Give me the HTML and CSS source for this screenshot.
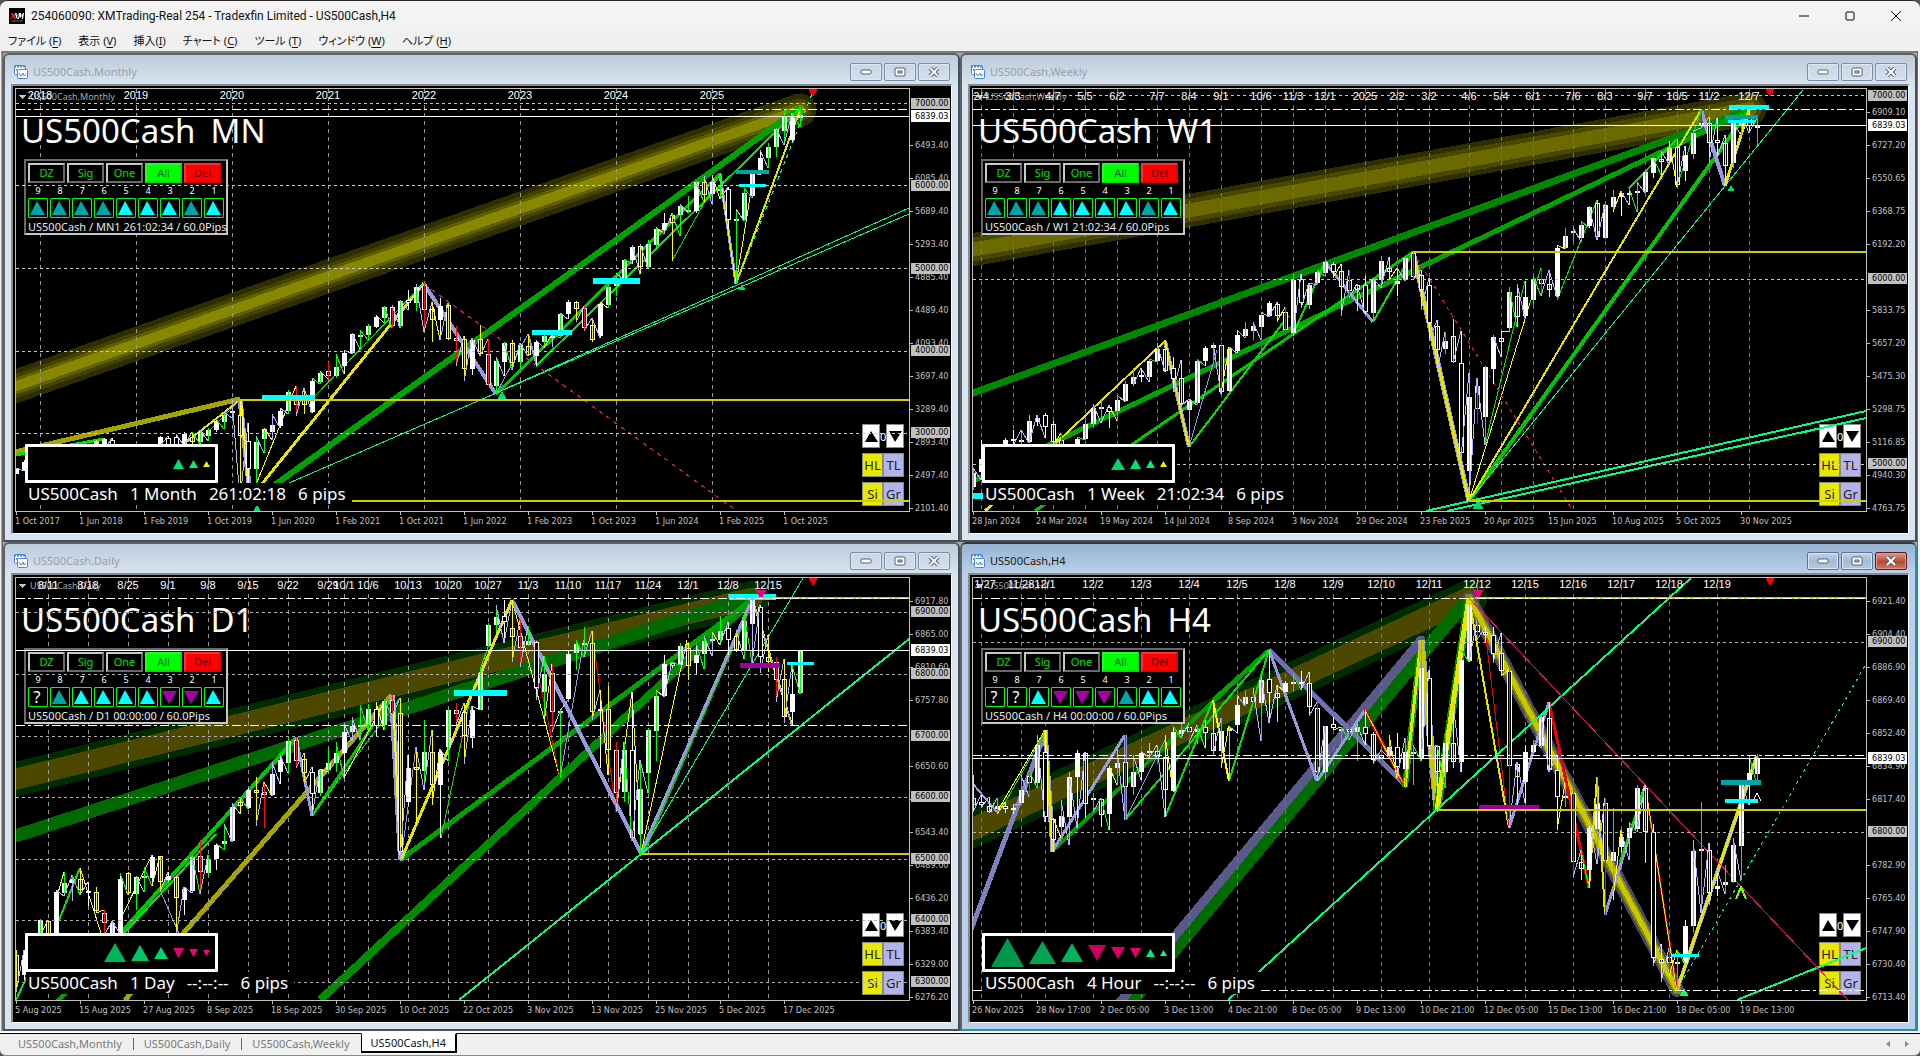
FILE: index.html
```html
<!DOCTYPE html>
<html lang="ja">
<head>
<meta charset="utf-8">
<title>254060090: XMTrading-Real 254 - Tradexfin Limited - US500Cash,H4</title>
<link rel="stylesheet" href="styles.css">
</head>
<body>
<div class="app">
  <header class="titlebar">
    <svg class="app-icon" viewBox="0 0 16 16" aria-hidden="true">
      <rect width="16" height="16" fill="#000"/>
      <path d="M2 5h2l1 2 2-2h1L6 8l1 3H5L4 9l-2 2H1l2-3z" fill="#d22"/>
      <path d="M6 5h1l1 2 2-2 0 0-2 3 1 3H8L7 9zM9 11l1-6h2l0 3 2-3h1l-1 6h-1l0-3-2 2-1-2 0 3z" fill="#fff"/>
      <path d="M2 13h12" stroke="#666"/>
    </svg>
    <h1 class="app-title">254060090: XMTrading-Real 254 - Tradexfin Limited - US500Cash,H4</h1>
    <div class="sys">
      <button class="sys-btn" aria-label="Minimize"><svg width="10" height="10"><path d="M0 5h10" stroke="#000"/></svg></button>
      <button class="sys-btn" aria-label="Maximize"><svg width="10" height="10"><rect x="1" y="1" width="8" height="8" rx="1" fill="none" stroke="#000"/></svg></button>
      <button class="sys-btn" aria-label="Close"><svg width="10" height="10"><path d="M0 0l10 10M10 0L0 10" stroke="#000"/></svg></button>
    </div>
  </header>
  <nav class="menu">
    <button class="menu-item">ファイル (<u>F</u>)</button>
    <button class="menu-item">表示 (<u>V</u>)</button>
    <button class="menu-item">挿入(<u>I</u>)</button>
    <button class="menu-item">チャート (<u>C</u>)</button>
    <button class="menu-item">ツール (<u>T</u>)</button>
    <button class="menu-item">ウィンドウ (<u>W</u>)</button>
    <button class="menu-item">ヘルプ (<u>H</u>)</button>
  </nav>
  <main class="mdi" id="mdi"></main>
  <footer class="tabs">
    <button class="tab">US500Cash,Monthly</button>
    <button class="tab">US500Cash,Daily</button>
    <button class="tab">US500Cash,Weekly</button>
    <button class="tab active">US500Cash,H4</button>
    <div class="tab-scroll">
      <button class="scroll-btn" aria-label="Scroll left"><svg width="4" height="6"><path d="M4 0v6L0 3z" fill="#8a8a8a"/></svg></button>
      <button class="scroll-btn" aria-label="Scroll right"><svg width="4" height="6"><path d="M0 0v6l4-3z" fill="#8a8a8a"/></svg></button>
    </div>
  </footer>
</div>
<script src="charts.js"></script>
</body>
</html>
```
FILE: styles.css
```css
* { box-sizing: border-box; }
html, body { height: 100%; }
body { margin: 0; background: #555; font-family: "Noto Sans", "Noto Sans CJK JP", sans-serif; font-size: 11px; }
button { font: inherit; margin: 0; padding: 0; border: 0; background: none; color: inherit; }

.app { display: flex; flex-direction: column; min-height: 100vh; border-top: 1px solid #2a2626; border-bottom: 1px solid #8a8a8a; border-radius: 8px 8px 6px 6px; background: #f0f0f0; overflow: hidden; }

.titlebar { display: flex; align-items: center; height: 30px; padding-left: 9px; background: #f3f3f3; }
.app-icon { width: 16px; height: 16px; }
.app-title { flex: 1; margin: 0 0 0 6px; font-family: Roboto, sans-serif; font-size: 12px; font-weight: 400; line-height: 16px; color: #111; }
.sys { display: flex; padding-right: 1px; height: 100%; }
.sys-btn { width: 46px; display: flex; align-items: center; justify-content: center; }

.menu { display: flex; height: 20px; padding-left: 8px; gap: 17px; }
.menu-item { font-family: "Noto Sans", "Noto Sans CJK JP", sans-serif; font-feature-settings: "palt"; line-height: 20px; white-space: nowrap; color: #111; }
.menu-item u { text-underline-offset: 2px; }

.mdi { flex: 1; display: grid; grid-template-columns: 1fr 1fr; grid-template-rows: 1fr 1fr; margin: 0 3px; border-top: 2px solid #7a7a7a; background: #ababab; box-shadow: -1px 0 #696969, -2px 0 #a0a0a0, 1px 0 #696969, 2px 0 #fff; }

.win { display: flex; flex-direction: column; min-width: 0; min-height: 0; padding: 0 6px 6px; border: 2px solid; border-color: #5c6166 #4b4f54 #4b4f54 #5c6166; border-radius: 6px 6px 0 0; background: linear-gradient(#bccbd9, #d7e4f2 30px); overflow: hidden; }
.win.active { background: linear-gradient(#98b4d3, #b9d1ea 30px); border-color: #33383d #2c8ea8 #2c8ea8 #5c6166; }
.win-bar { display: flex; align-items: center; height: 29px; padding: 5px 2px 0 3px; gap: 5px; }
.win-title { flex: 1; margin: 0; font-size: 11px; font-weight: 400; line-height: 16px; color: #9b9fa3; }
.win.active .win-title { color: #1c1c1c; }
.win-icon { width: 14px; height: 14px; }
.win-btns { display: flex; gap: 2px; }
.win-btn { width: 32px; height: 18px; display: flex; align-items: center; justify-content: center; border: 1px solid #7d8da8; border-radius: 2px; background: linear-gradient(#c9d7e5, #d3dfec); box-shadow: inset 0 0 0 1px #dce8f3; }
.win.active .win-btn { background: linear-gradient(#c0d2e6, #a4bdd8 50%, #b4cbe3); border-color: #5f7391; }
.win.active .win-btn.close { background: linear-gradient(#dd9a8c, #c2503a 50%, #b8432e 51%, #cf7a62); border-color: #5a1d1d; box-shadow: inset 0 0 0 1px #dd9a8c; }

.client { flex: 1; min-height: 0; display: grid; grid-template-columns: minmax(0, 1fr) 41px; grid-template-rows: minmax(0, 1fr) 21px; padding: 2px 0 0 2px; background: #000; border: solid; border-width: 2px 1px 1px 2px; border-color: #8a8a8a #fff #fff #8a8a8a; }
.plot { position: relative; border: 1px solid #c0c0c0; overflow: hidden; }
.layer { position: absolute; inset: 0; width: 100%; height: 100%; pointer-events: none; }
.price-axis, .time-axis { display: block; width: 100%; height: 100%; overflow: visible; }
.axis-text { font-family: "DejaVu Sans Condensed", "DejaVu Sans", sans-serif; font-size: 9px; fill: #c0c0c0; }
.axis-text.on-box { fill: #000; }
.date-text { font-family: "Liberation Sans", Arial, sans-serif; font-size: 11px; fill: #fff; text-anchor: middle; }
.corner { font-family: "Noto Sans", sans-serif; font-size: 9px; fill: #a8a8a8; }

.heading { position: absolute; left: 5px; top: 20px; margin: 0; display: flex; gap: 15px; font-size: 33px; font-weight: 400; line-height: 44px; color: #fff; white-space: nowrap; }

.panel { position: absolute; left: 8px; top: 70px; width: 204px; height: 76px; padding: 2px; border: 2px solid; border-color: #696969 #c8c8c8 #c8c8c8 #696969; background: #000; overflow: hidden; }
.panel-row { display: flex; gap: 2px; }
.cmd { width: 37px; height: 20px; border: 2px solid; border-color: #c8c8c8 #696969 #696969 #c8c8c8; color: #00e000; font-size: 11px; line-height: 16px; text-align: center; }
.cmd.all { background: #0f0; border-color: #20ff20 #00e000 #00e000 #20ff20; color: #063; }
.cmd.del { background: #f00; border-color: #ff3030 #e00000 #e00000 #ff3030; color: #500; }
.num { width: 20px; height: 15px; font-size: 9px; line-height: 15px; text-align: center; color: #fff; }
.cell { width: 20px; height: 20px; padding-right: 2px; border: 1px solid #0f0; border-radius: 1px; display: flex; align-items: center; justify-content: center; font-size: 16px; line-height: 18px; color: #fff; }
.status { margin: 0; padding-top: 1px; font-size: 11px; line-height: 16px; color: #e8e8e8; white-space: nowrap; }

.tools { position: absolute; right: 5px; top: 335px; width: 42px; display: flex; flex-direction: column; gap: 5px; }
.tool-row { display: flex; justify-content: space-between; align-items: center; color: #fff; font-size: 11px; }
.tool { height: 24px; flex: 1; border: 1px solid #8a8a8a; font-size: 13px; line-height: 20px; color: #222; background: #b4b4ec; }
.tool.yellow { background: #eaea00; }
.tool.arrow { flex: none; width: 18px; background: #fff; display: flex; align-items: center; justify-content: center; }

.signals { position: absolute; z-index: 2; left: 9px; top: 355px; width: 193px; height: 39px; display: flex; justify-content: flex-end; align-items: center; gap: 5px; padding-right: 5px; border: 3px solid #fff; border-radius: 1px; background: #000; }
.info { position: absolute; z-index: 2; left: 10px; top: 394px; margin: 0; padding: 0 6px 0 2px; display: flex; gap: 12px; font-size: 17px; line-height: 22px; color: #fff; background: #000; white-space: nowrap; }

.tabs { display: flex; align-items: stretch; height: 22px; margin-top: 2px; padding: 0 8px 2px 7px; border-top: 1px solid #000; color: #7a7a7a; box-shadow: 0 -2px #fff; }
.tab { position: relative; padding: 0 11px; line-height: 18px; }
.tab + .tab::before { content: ""; position: absolute; left: 0; top: 4px; height: 12px; border-left: 1px solid #666; }
.tab.active { margin-top: -1px; border: 1px solid #000; border-top-color: #fff; border-width: 1px 2px 2px 1px; background: #fff; color: #111; padding: 0 9px; }
.tab.active::before { display: none; }
.tab-scroll { margin-left: auto; display: flex; gap: 8px; }
.scroll-btn { width: 11px; display: flex; align-items: center; justify-content: center; }
```
FILE: charts.js
```javascript
// Bars are written as kind + high,bodyTop,bodyBottom,low ("f" filled, "o" outlined, "-" no bar).
// Lines are x1,y1,x2,y2,colour,width[,dash]. All coordinates share one workspace origin.
const C = { g: '#00a400', G: '#00c800', l: '#00e400', y: '#e6e600', Y: '#ffff00', o: '#a5a500', v: '#9999e0', r: '#ee0000', s: '#00ff7f', p: '#f0106f', h: '#cfcf00' };

const charts = [
{
  name: 'Monthly', frame: 'MN', info: ['1 Month', '261:02:18'], status: 'MN1 261:02:34', ox: 16, oy: 89,
  cells: 'ttttccctc', signals: ['u11', 'u9', 'y7'],
  bars: 'f468,468,474,474 f460,462,470,471 - - - - - - - - f440,441,446,448 f438,439,446,450 o438,440,446,450 - - - - - f436,437,446,446 o436,438,446,446 o434,437,446,446 f432,434,446,446 o432,437,442,446 f430,432,442,444 f428,430,436,441 f419,421,430,432 f412,415,422,429 f400,411,413,418 o399,415,436,500 o423,441,469,505 f436,442,469,490 f428,429,439,453 f414,425,432,440 f408,411,426,428 f390,392,411,414 o386,396,405,416 o388,400,405,414 f378,381,412,413 f371,373,382,384 o362,371,376,379 f354,367,376,378 f350,353,366,374 f333,334,353,354 f330,335,337,349 f324,326,335,340 f315,317,327,328 f306,307,318,323 o305,307,326,328 f300,301,326,328 o290,300,303,310 f284,287,303,311 o283,285,310,332 o302,309,320,342 f298,306,320,340 o303,305,339,340 o326,338,341,366 o336,339,369,381 f338,340,369,375 o325,339,354,356 o339,354,385,386 f357,361,386,394 f342,343,362,376 o340,343,363,370 f343,345,362,369 o334,346,355,356 f340,342,356,366 f334,336,342,348 f334,336,338,347 f313,314,336,338 f300,302,314,319 o301,302,309,322 o306,308,328,331 o318,325,340,342 f302,304,336,338 f285,287,305,308 f273,281,286,296 f259,260,278,280 f245,247,260,264 o244,246,267,274 f240,244,267,268 f227,229,245,250 f213,223,230,234 o213,215,223,261 f204,206,215,236 f196,210,212,213 f181,182,211,213 o176,182,195,203 f175,182,194,204 f173,189,191,199 o187,189,220,229 f209,219,221,284 f188,193,220,221 f172,174,196,198 f150,158,174,175 f143,147,158,168 f128,129,147,157 f110,117,131,145 f113,117,140,142 f108,115,118,127',
  back: [
    [8,389,800,110,'#2d2d00',33], [8,389,800,110,'#434300',23], [8,389,800,110,'#5f5f00',16], [8,389,800,110,'#878700',10],
    [15,452,240,399,C.o,5], [15,455,104,439,C.l,3], [251,502,800,108,C.g,6], [185,443,240,400,C.y,2], [200,440,240,400,C.l,1],
    [496,394,720,174,C.G,3], [536,366,800,108,C.l,2], [672,261,720,174,C.l,1], [257,490,424,283,C.y,3], [424,284,496,394,C.v,4], [496,394,528,334,C.v,1], [528,334,537,366,C.v,2],
    [240,399,251,505,C.v,5], [241,399,250,505,C.Y,2], [257,482,296,386,C.Y,1], [315,396,424,283,C.l,1],
    [720,174,736,284,C.v,3], [722,190,736,284,C.Y,1], [736,284,752,185,C.Y,1], [736,284,800,110,C.y,2], [736,284,812,94,C.s,1,'4 4'],
    [289,483,909,214,C.s,1], [496,393,909,208,C.s,1], [424,284,737,511,C.p,1,'5 4']
  ],
  front: [[240,400,909,400,C.h,2], [348,501,909,501,C.h,2]],
  zones: [[262,395,53,4,'#0ff'], [532,330,40,5,'#0ff'], [593,278,47,6,'#0ff'], [736,170,33,4,'#00a5a5'], [739,184,27,3,'#0ff']],
  marks: [[742,284,7,'#00e070'], [502,391,9,'#00e070'], [257,505,11,'#00e070']],
  last: 116, dashdot: [109], grid: [103, 185, 268, 351, 433], step: '#c8c8c8',
  dates: [[40,'2018'],[136,'2019'],[232,'2020'],[328,'2021'],[424,'2022'],[520,'2023'],[616,'2024'],[712,'2025']], dateColor: '#999', dateY: 99,
  prices: [[145,'6493.40'],[178,'6085.40'],[211,'5689.40'],[244,'5293.40'],[277,'4885.40'],[310,'4489.40'],[343,'4093.40'],[376,'3697.40'],[409,'3289.40'],[442,'2893.40'],[475,'2497.40'],[508,'2101.40']],
  levels: [[103,'7000.00'],[185,'6000.00'],[268,'5000.00'],[350,'4000.00'],[432,'3000.00']],
  times: ['1 Oct 2017','1 Jun 2018','1 Feb 2019','1 Oct 2019','1 Jun 2020','1 Feb 2021','1 Oct 2021','1 Jun 2022','1 Feb 2023','1 Oct 2023','1 Jun 2024','1 Feb 2025','1 Oct 2025']
},
{
  name: 'Weekly', frame: 'W1', info: ['1 Week', '21:02:34'], status: 'W1 21:02:34', ox: 973, oy: 89,
  cells: 'tttcccctc', signals: ['u14', 'u11', 'u9', 'y7'],
  bars: 'f468,473,487,490 f440,459,472,480 - - f438,440,446,446 f430,439,441,446 f430,440,442,446 f415,421,442,443 f415,418,422,426 o413,415,427,438 o421,424,442,446 o433,440,446,446 - f437,439,446,446 f420,424,439,440 f404,408,424,428 f400,407,409,423 o405,407,412,428 f395,400,411,421 f381,384,401,402 f368,377,384,386 f368,375,377,382 f359,361,377,382 f343,349,361,362 o340,349,371,372 o357,368,379,392 o360,378,404,406 f399,401,410,447 f359,361,403,405 f346,348,361,366 f343,345,348,363 o342,345,392,394 f347,349,391,392 f330,335,351,353 f322,329,336,338 f322,326,331,340 f312,315,327,340 f301,303,316,317 o302,304,316,322 o307,312,330,335 f274,280,333,336 o274,279,303,308 f283,285,305,309 f270,272,283,285 f260,262,273,276 o262,264,272,278 o264,271,287,316 o270,280,291,298 o284,285,290,311 o276,285,312,314 f278,279,313,322 f256,261,280,288 o257,268,272,280 f268,281,284,296 f256,258,280,281 o252,253,277,280 o270,275,290,310 o278,285,323,341 o320,326,350,372 f332,341,349,354 o319,336,362,363 o331,363,453,458 f373,397,471,501 o378,386,409,424 f366,367,417,445 f335,337,369,384 o331,338,342,357 f287,292,328,332 o284,296,317,327 f281,297,316,318 f276,279,300,305 o268,279,284,296 o270,284,290,297 f245,248,296,297 f228,236,248,249 f227,231,233,242 f221,225,238,242 f206,207,226,228 o200,203,237,240 f204,205,238,239 f190,197,207,212 f191,193,197,216 o188,193,195,205 f182,191,193,212 f170,172,192,193 f157,158,173,178 o151,159,162,175 f141,148,161,164 o139,147,185,187 f146,155,171,181 f131,133,154,159 o110,123,125,128 o117,123,143,163 o118,140,143,158 o135,143,166,186 f122,123,163,168 f114,120,125,135 o110,118,126,133 f118,125,128,147',
  back: [
    [960,252,1750,109,'#2e2e00',33], [960,252,1750,109,'#484800',23], [960,252,1750,109,'#6a6a00',14],
    [965,396,1749,110,'#008800',7], [973,481,1749,110,'#00a400',5], [1469,501,1749,110,C.G,4], [1035,511,1413,252,C.G,3],
    [1189,447,1288,316,C.l,2], [1293,335,1325,262,C.l,2], [1373,322,1413,252,C.l,2], [1056,443,1165,341,C.y,2], [985,511,1000,497,C.y,3],
    [1165,341,1189,447,C.v,4], [1165,341,1189,447,C.y,2], [1325,262,1373,322,C.v,3], [1413,252,1469,501,C.v,5], [1413,252,1469,501,C.y,3],
    [1469,501,1701,110,C.y,2], [1469,501,1530,303,C.Y,1], [1530,303,1541,268,C.l,1], [1485,445,1525,281,C.l,1], [1557,300,1597,200,C.l,1], [1469,501,1803,90,C.s,1],
    [1701,110,1725,186,C.v,4], [1725,186,1749,110,C.y,3], [1426,511,1866,411,C.s,2], [1447,511,1866,418,C.s,2], [1413,252,1573,511,C.p,1,'4 4'],
    [1317,283,1325,262,C.l,2], [1189,447,1217,350,C.v,1], [1701,110,1677,187,C.l,1], [1629,188,1677,139,C.l,2]
  ],
  front: [[1413,252,1866,252,C.h,2], [1470,501,1866,501,C.h,2], [1800,426,1866,411,C.s,2], [1800,433,1866,418,C.s,2]],
  zones: [[1729,105,40,4,'#0ff'], [1725,115,33,4,'#00a5a5'], [1728,120,27,3,'#0ff'], [972,493,13,6,'#0ff']],
  marks: [[1731,185,7,'#00e070'], [1478,500,11,'#00e070']],
  last: 125, dashdot: [109], grid: [95, 279, 464], step: '#c8c8c8',
  dates: [[981,'2/4'],[1013,'3/3'],[1053,'4/7'],[1085,'5/5'],[1117,'6/2'],[1157,'7/7'],[1189,'8/4'],[1221,'9/1'],[1261,'10/6'],[1293,'11/3'],[1325,'12/1'],[1365,'2025'],[1397,'2/2'],[1429,'3/2'],[1469,'4/6'],[1501,'5/4'],[1533,'6/1'],[1573,'7/6'],[1605,'8/3'],[1645,'9/7'],[1677,'10/5'],[1709,'11/2'],[1749,'12/7']], dateColor: '#777', dateY: 100,
  prices: [[112,'6909.10'],[145,'6727.20'],[178,'6550.65'],[211,'6368.75'],[244,'6192.20'],[310,'5833.75'],[343,'5657.20'],[376,'5475.30'],[409,'5298.75'],[442,'5116.85'],[475,'4940.30'],[508,'4763.75']],
  levels: [[95,'7000.00'],[278,'6000.00'],[463,'5000.00']],
  times: ['28 Jan 2024','24 Mar 2024','19 May 2024','14 Jul 2024','8 Sep 2024','3 Nov 2024','29 Dec 2024','23 Feb 2025','20 Apr 2025','15 Jun 2025','10 Aug 2025','5 Oct 2025','30 Nov 2025']
},
{
  name: 'Daily', frame: 'D1', info: ['1 Day', '--:--:--'], status: 'D1 00:00:00', ox: 16, oy: 578,
  cells: '?tccccmmc', signals: ['u22', 'u18', 'u14', 'd11', 'd9', 'd7'],
  bars: 'o950,955,983,992 f950,955,975,980 - f919,920,936,936 o920,921,936,936 f890,892,933,934 f872,883,893,896 f875,879,883,901 o868,879,890,895 f882,891,893,906 o887,892,911,913 o910,913,923,936 f921,923,936,936 f873,879,933,934 o872,873,893,895 f876,877,894,910 f867,876,878,892 f855,857,878,886 o856,856,882,892 f872,876,880,882 o876,877,898,936 f887,889,900,915 f855,857,891,893 o840,856,872,894 f855,859,873,876 f843,845,859,870 f824,841,844,850 f803,807,841,842 o797,802,806,814 f788,790,808,809 o777,790,793,826 o782,792,795,828 f762,774,795,796 f755,760,772,784 f737,741,763,773 o737,740,761,768 o753,759,773,784 o767,772,794,816 f769,770,793,796 f747,763,770,772 f742,753,763,772 f724,732,753,778 f717,726,732,741 f705,725,727,740 f704,709,725,730 o702,709,726,736 f699,701,725,730 o695,700,714,716 o698,713,852,861 f755,768,802,806 o747,767,770,824 f720,752,771,790 o730,752,785,805 f749,752,785,838 f709,710,747,761 o703,710,714,725 o703,712,736,764 f706,710,738,748 f670,673,710,710 f623,625,646,647 f605,617,625,632 o600,616,622,643 o600,628,637,662 o620,636,648,667 f626,641,645,646 o641,642,688,700 f656,674,692,723 o664,673,712,732 f711,711,713,778 f650,654,699,700 f640,644,653,670 f627,643,645,657 o631,643,712,720 f690,709,711,768 o686,709,750,775 o742,750,793,812 f742,750,792,802 o692,750,838,841 f760,789,834,855 f728,730,773,793 f690,696,731,761 f655,664,696,697 o662,663,666,668 f643,646,665,665 o643,648,666,680 f643,655,663,674 f636,641,654,669 f632,639,641,656 f616,631,640,645 o622,628,640,655 o630,636,650,652 f613,621,650,659 f598,600,624,663 o605,607,657,673 o635,657,662,672 o657,662,680,702 o659,679,717,723 f665,694,712,725 f650,650,693,694',
  back: [
    [0,783,752,598,'#002c00',34], [0,783,752,598,'#4d4800',21], [0,841,752,596,'#006a00',13], [320,1000,752,600,'#008c00',8], [400,860,752,600,C.g,5],
    [125,1000,392,695,C.o,5], [118,936,296,738,C.G,4], [118,940,216,834,C.l,2], [57,925,80,868,C.l,2], [57,1001,66,993,C.g,4], [16,1000,32,966,C.l,2], [312,816,392,697,C.G,3], [312,816,400,698,C.l,1],
    [56,900,64,872,C.Y,1], [80,868,102,936,C.Y,1], [120,920,152,855,C.Y,1], [160,890,180,936,C.v,1],
    [296,737,312,816,C.v,3], [392,695,401,860,C.v,6], [393,695,400,855,C.Y,2], [401,860,416,747,C.v,1], [401,860,512,600,C.y,3], [344,778,384,702,C.Y,1], [441,838,470,700,C.l,1],
    [512,600,560,778,C.Y,1], [528,626,560,778,C.r,1], [560,778,584,640,C.v,1], [592,631,616,812,C.r,1], [616,812,632,692,C.Y,1], [632,692,641,853,C.Y,1],
    [512,600,641,853,C.v,4], [643,853,752,602,C.G,3], [641,853,750,604,C.v,3], [641,853,687,640,C.Y,1], [641,853,803,578,C.s,1], [459,1000,909,639,C.s,2],
    [752,598,792,725,C.Y,2], [752,598,792,725,C.v,1]
  ],
  front: [[755,598,909,598,C.h,2], [641,854,909,854,C.h,2]],
  zones: [[454,690,53,6,'#0ff'], [729,594,47,6,'#0ff'], [740,663,40,5,'#a000a0'], [787,662,27,3,'#0ff']],
  marks: [[761,590,11,'#f00078','d']],
  last: 650, dashdot: [598, 725], grid: [612, 674, 736, 797, 859, 920, 982], step: '#b0b0b0',
  dates: [[48,'8/11'],[88,'8/18'],[128,'8/25'],[168,'9/1'],[208,'9/8'],[248,'9/15'],[288,'9/22'],[328,'9/29'],[344,'10/1'],[368,'10/6'],[408,'10/13'],[448,'10/20'],[488,'10/27'],[528,'11/3'],[568,'11/10'],[608,'11/17'],[648,'11/24'],[688,'12/1'],[728,'12/8'],[768,'12/15']], dateColor: '#999', dateY: 589,
  prices: [[601,'6917.80'],[634,'6865.00'],[667,'6810.60'],[700,'6757.80'],[766,'6650.60'],[799,'6596.20'],[832,'6543.40'],[865,'6489.00'],[898,'6436.20'],[931,'6383.40'],[964,'6329.00'],[997,'6276.20']],
  levels: [[611,'6900.00'],[673,'6800.00'],[735,'6700.00'],[796,'6600.00'],[858,'6500.00'],[919,'6400.00'],[981,'6300.00']],
  times: ['5 Aug 2025','15 Aug 2025','27 Aug 2025','8 Sep 2025','18 Sep 2025','30 Sep 2025','10 Oct 2025','22 Oct 2025','3 Nov 2025','13 Nov 2025','25 Nov 2025','5 Dec 2025','17 Dec 2025']
},
{
  name: 'H4', frame: 'H4', info: ['4 Hour', '--:--:--'], status: 'H4 00:00:00', ox: 973, oy: 578, active: true,
  cells: '??cmmmtcc', signals: ['u33', 'u27', 'u22', 'd18', 'd14', 'd11', 'u9', 'u7'],
  bars: 'o775,798,805,812 o795,802,805,808 o797,806,812,813 f798,806,809,814 o802,806,809,813 f804,808,810,814 f775,790,803,804 o770,776,783,797 f735,745,783,788 o730,752,817,822 o818,819,840,852 f800,816,827,838 f772,777,817,845 f750,753,777,828 o752,753,804,818 f793,798,800,812 o798,799,815,827 f766,768,814,830 f750,763,768,785 o735,762,787,820 f755,772,787,795 f751,753,772,780 f743,751,753,758 o745,751,757,765 o735,757,790,817 f726,732,791,792 f716,730,734,738 o723,727,732,742 f725,729,732,744 o720,727,733,748 o700,733,751,755 f718,731,751,768 f726,728,731,781 f695,705,725,733 f690,697,704,706 o688,697,702,704 f676,680,703,741 o650,679,693,723 o685,693,698,722 f681,683,692,692 f673,682,684,692 o671,682,684,690 o672,683,707,716 o702,708,772,781 f726,726,772,779 o717,724,728,730 f727,729,731,742 o719,729,732,740 f724,727,732,761 o710,727,734,745 o732,734,760,764 o750,755,758,765 f735,747,755,758 o733,747,767,778 f738,752,769,788 f745,752,754,785 f641,668,758,761 o670,678,746,750 o745,746,772,812 f733,743,772,788 o702,743,762,768 f650,660,762,772 f598,605,661,662 o620,625,632,640 o627,632,635,642 o627,635,654,663 o633,653,671,676 o670,671,766,828 o762,764,777,805 f745,752,782,803 f740,745,752,756 f715,717,746,748 o702,718,770,772 o755,770,797,830 f783,796,798,807 o788,793,862,877 o850,862,869,880 f820,828,870,888 f777,804,829,864 o798,803,861,915 f808,852,861,900 f830,837,847,852 f822,828,838,860 f785,788,829,832 o785,788,832,863 o824,832,958,966 o944,959,963,982 o948,957,963,976 f950,962,964,990 f920,926,963,964 f840,851,926,933 f802,849,851,913 o843,850,893,905 f870,886,889,896 f865,882,885,894 f838,845,882,883 f780,785,846,880 f755,773,785,805 f754,758,774,785',
  back: [
    [960,835,1469,598,'#002c00',36], [960,835,1469,598,'#4d4800',22], [1130,1003,1469,598,'#006c00',13], [1120,1002,1421,640,'#5a5a8a',9],
    [969,935,1045,733,'#8080c0',5], [1269,650,1405,785,'#7070b0',5], [1269,650,1317,781,C.v,3], [1317,781,1365,710,C.v,3], [973,784,997,812,C.v,2],
    [1053,850,1269,650,'#009c00',4], [1213,700,1269,650,C.g,4], [1125,820,1269,650,C.l,2], [1165,817,1213,700,C.l,2], [1053,850,1125,735,C.v,3], [1125,735,1125,820,C.v,3], [1125,820,1165,740,C.v,1], [1229,781,1269,650,C.l,2],
    [997,812,1045,730,C.Y,1], [1002,808,1045,732,C.l,1], [1045,730,1053,852,C.v,5], [1045,730,1053,852,C.y,3], [1165,735,1173,791,C.Y,1], [1213,700,1229,781,C.Y,2], [1365,710,1405,787,C.r,3], [1365,710,1405,787,C.y,1],
    [1405,787,1421,640,'#00a000',6], [1405,787,1421,640,C.y,3], [1421,640,1437,810,C.v,7], [1421,640,1437,810,'#c8c800',5], [1437,810,1469,598,'#009000',8], [1437,810,1469,598,C.y,5],
    [1469,598,1677,990,'#46466e',14], [1469,598,1677,990,'#8a8a00',9], [1469,598,1677,990,'#c8c800',5],
    [1469,598,1509,828,C.y,2], [1485,630,1509,828,C.r,1], [1549,702,1589,888,C.r,3], [1509,828,1549,702,C.v,3], [1589,888,1597,777,C.y,2], [1597,777,1605,915,C.y,2], [1605,915,1645,786,C.v,3], [1620,862,1645,786,C.l,2], [1645,786,1677,990,C.r,2], [1646,790,1676,986,C.y,1],
    [1677,990,1757,756,C.v,4], [1677,990,1757,756,C.y,3], [1228,1000,1691,578,C.s,2], [1737,1000,1866,948,C.s,2], [1677,990,1866,664,C.s,1,'3 4'], [1469,598,1848,1000,C.p,1]
  ],
  front: [[1475,598,1866,598,C.h,2], [1437,810,1866,810,C.h,2], [1810,971,1866,948,C.s,2], [1811,961,1848,1000,C.p,1]],
  zones: [[1479,805,60,6,'#a000a0'], [1721,780,40,5,'#00a5a5'], [1725,799,33,4,'#0ff'], [1672,954,27,3,'#0ff']],
  marks: [[1478,590,11,'#f00078','d'], [1684,988,9,'#00ff7f']], carets: [[1741,899,5,12,'#7fff00',2], [1757,801,4,8,'#fff',1]],
  last: 758, dashdot: [598, 755, 990], grid: [642, 832], step: '#b0b0b0',
  dates: [[985,'1/27'],[1021,'11/28'],[1045,'12/1'],[1093,'12/2'],[1141,'12/3'],[1189,'12/4'],[1237,'12/5'],[1285,'12/8'],[1333,'12/9'],[1381,'12/10'],[1429,'12/11'],[1477,'12/12'],[1525,'12/15'],[1573,'12/16'],[1621,'12/17'],[1669,'12/18'],[1717,'12/19']], dateColor: '#777', dateY: 588,
  prices: [[601,'6921.40'],[634,'6904.40'],[667,'6886.90'],[700,'6869.40'],[733,'6852.40'],[766,'6834.90'],[799,'6817.40'],[865,'6782.90'],[898,'6765.40'],[931,'6747.90'],[964,'6730.40'],[997,'6713.40']],
  levels: [[641,'6900.00'],[831,'6800.00']],
  times: ['26 Nov 2025','28 Nov 17:00','2 Dec 05:00','3 Dec 13:00','4 Dec 21:00','8 Dec 05:00','9 Dec 13:00','10 Dec 21:00','12 Dec 05:00','15 Dec 13:00','16 Dec 21:00','18 Dec 05:00','19 Dec 13:00']
}
];

const line = ([x1, y1, x2, y2, c, w, dash]) =>
  `<line x1="${x1}" y1="${y1}" x2="${x2}" y2="${y2}" stroke="${c}" stroke-width="${w}"${dash ? ` stroke-dasharray="${dash}"` : ''}${w > 8 ? ' stroke-linecap="round"' : ''}/>`;
const rect = (x, y, w, h, c) => `<rect x="${x}" y="${y}" width="${w}" height="${h}" fill="${c}"/>`;
const text = (x, y, cls, s) => `<text x="${x}" y="${y}" class="${cls}">${s}</text>`;
const tri = (x, y, w, c, dir) => {
  const h = Math.round(w * 0.85), l = x - w / 2, r = x + w / 2;
  return dir === 'd' ? `<path d="M${l} ${y}H${r}L${x} ${y + h}z" fill="${c}"/>` : `<path d="M${l} ${y + h}H${r}L${x} ${y}z" fill="${c}"/>`;
};

function candles(d) {
  const bars = d.bars.split(' ').map((s, i) => {
    if (s === '-') return null;
    const [h, t, b, l] = s.slice(1).split(',').map(Number);
    return { x: d.ox + 8 * i, up: s[0] === 'f', h, t, b, l };
  });
  let body = '', swing = '';
  bars.forEach((k, i) => {
    if (!k) return;
    body += rect(k.x, k.h, 1, k.l - k.h, '#fff') + rect(k.x - 2, k.t, 5, Math.max(k.b - k.t, 1), '#fff');
    if (!k.up && k.b - k.t > 2) body += rect(k.x - 1, k.t + 1, 3, k.b - k.t - 2, '#000');
    const n = bars[i + 1];
    const range = k.l - k.h;
    if (range > 12 && i % 4 !== 1) {
      const colour = k.up ? (i % 5 === 2 ? '#b4b4ff' : '#00ff00') : (i % 2 ? '#ff1010' : '#ffff00');
      swing += line([k.x, k.h, k.x, k.l, colour, 1]);
    }
    if (n && i % 5 !== 4) {
      const seg = n.h < k.h ? [k.x, k.h, n.x, n.l] : [k.x, k.l, n.x, n.h];
      const colour = i % 7 === 3 ? '#ffff00' : n.h < k.h && i % 3 === 1 ? '#00ff00' : '#b4b4ff';
      swing += line([...seg, colour, 1]);
    }
  });
  return body + swing;
}

function backLayer(d) {
  const top = d.oy, bottom = d.oy + 422;
  let s = d.back.filter(a => a[5] > 8).map(line).join('');
  d.dates.forEach(([x]) => {
    const gx = x === d.ox + 12 ? x - 4 : x;
    s += line([gx, top, gx, bottom, d.dateColor, 1, '4 4']);
  });
  s += d.back.filter(a => a[5] <= 8).map(line).join('');
  s += candles(d);
  s += d.zones.map(a => rect(...a)).join('');
  s += d.marks.map(a => tri(...a)).join('');
  (d.carets || []).forEach(([x, y, w, h, c, sw]) => { s += `<path d="M${x - w} ${y}l${w} ${-h}l${w} ${h}" fill="none" stroke="${c}" stroke-width="${sw}"/>`; });
  s += tri(d.ox + 797, top, 9, '#f00', 'd');
  s += `<path d="M${d.ox + 3} ${top + 6}h7l-4 4z" fill="#c0c0c0"/>`;
  s += text(d.ox + 14, top + 11, 'corner', 'US500Cash,' + d.name);
  d.dates.forEach(([x, t]) => { s += text(x, d.dateY, 'date-text', t); });
  return s;
}

function frontLayer(d) {
  const l = d.ox, r = d.ox + 893;
  let s = d.grid.map(y => line([l, y, r, y, d.step, 1, '3 3'])).join('');
  s += d.front.map(line).join('');
  s += d.dashdot.map(y => line([l, y, r, y, '#fff', 1, '9 3 3 3'])).join('');
  return s + rect(l, d.last, 894, 1, '#fff');
}

function priceAxis(d) {
  const y0 = d.oy - 1;
  let s = d.prices.map(([y, t]) => rect(0, y - y0, 3, 1, '#c0c0c0') + text(5, y - y0 + 3, 'axis-text', t)).join('');
  s += d.levels.map(([y, t]) => rect(1, y - y0 - 5, 39, 11, '#c0c0c0') + text(5, y - y0 + 3, 'axis-text on-box', t)).join('');
  return s + rect(1, d.last - y0 - 6, 39, 12, '#fff') + text(5, d.last - y0 + 3, 'axis-text on-box', '6839.03');
}

const timeAxis = d => d.times.map((t, i) => rect(1 + 64 * i, 0, 1, 3, '#c0c0c0') + text(64 * i, 12, 'axis-text', t)).join('');

function cell(k) {
  if (k === '?') return '<span class="cell">?</span>';
  const c = { t: '#00a5a5', c: '#00ffff', m: '#a800a8' }[k];
  return `<span class="cell"><svg width="15" height="15"><path d="${k === 'm' ? 'M0 1h15L7 14z' : 'M0 14h15L7 0z'}" fill="${c}"/></svg></span>`;
}

function signal(s) {
  const w = +s.slice(1), h = Math.round(w * 0.87);
  const up = { 33: '#00984c', 27: '#00a454', 22: '#00b45c', 18: '#00c468', 14: '#00d470', 11: '#00e078', 9: '#00f080', 7: '#00ff80' };
  const down = { 18: '#c8005c', 14: '#d80064', 11: '#e8006c', 9: '#f00078', 7: '#ff0080' };
  const c = s[0] === 'y' ? '#f0f000' : s[0] === 'u' ? up[w] : down[w];
  return `<svg width="${w}" height="${h}" viewBox="0 0 ${w} ${h}"><path d="${s[0] === 'd' ? `M0 0h${w}L${w / 2} ${h}z` : `M0 ${h}h${w}L${w / 2} 0z`}" fill="${c}"/></svg>`;
}

const winIcon = `<svg class="win-icon" viewBox="0 0 14 14" aria-hidden="true"><rect x="0.5" y="0.5" width="11" height="9" rx="1" fill="#fff" stroke="#4a86d8"/><path d="M0 1.5h12" stroke="#4a86d8" stroke-width="2" stroke-dasharray="2 1"/><path d="M2 6l1-2 1 2" stroke="#4a86d8" fill="none"/><rect x="3.5" y="4.5" width="10" height="9" rx="1" fill="#fff" stroke="#4a86d8"/><path d="M5 8l2 3 2-3 1 3 2-2" stroke="#4a86d8" fill="none"/></svg>`;
const glyph = {
  min: '<svg width="12" height="6"><rect x="1" y="1" width="10" height="4" rx="1" fill="#fff" stroke="#56606e"/></svg>',
  max: '<svg width="12" height="10"><rect x="1" y="1" width="10" height="8" rx="1" fill="#fff" stroke="#56606e"/><rect x="4" y="4" width="4" height="2" fill="#c0d0e0" stroke="#56606e"/></svg>',
  close: '<svg width="12" height="10"><path d="M2 1l8 8M10 1l-8 8" stroke="#56606e" stroke-width="4"/><path d="M2 1l8 8M10 1l-8 8" stroke="#fff" stroke-width="2"/></svg>'
};

document.getElementById('mdi').innerHTML = charts.map(d => {
  const shift = `translate(${-d.ox} ${-d.oy})`;
  return `<section class="win${d.active ? ' active' : ''}">
  <div class="win-bar">${winIcon}<h2 class="win-title">US500Cash,${d.name}</h2>
    <div class="win-btns"><button class="win-btn" aria-label="Minimize">${glyph.min}</button><button class="win-btn" aria-label="Restore">${glyph.max}</button><button class="win-btn close" aria-label="Close">${glyph.close}</button></div></div>
  <div class="client">
    <div class="plot">
      <svg class="layer" shape-rendering="crispEdges"><g transform="${shift}">${backLayer(d)}</g></svg>
      <h3 class="heading"><span>US500Cash</span><span>${d.frame}</span></h3>
      <div class="panel">
        <div class="panel-row"><button class="cmd">DZ</button><button class="cmd">Sig</button><button class="cmd">One</button><button class="cmd all">All</button><button class="cmd del">Del</button></div>
        <div class="panel-row">${[9, 8, 7, 6, 5, 4, 3, 2, 1].map(n => `<span class="num">${n}</span>`).join('')}</div>
        <div class="panel-row">${[...d.cells].map(cell).join('')}</div>
        <p class="status">US500Cash / ${d.status} / 60.0Pips</p>
      </div>
      <div class="tools">
        <div class="tool-row"><button class="tool arrow" aria-label="Up"><svg width="13" height="11"><path d="M0 11h13L6 0z"/></svg></button><span>0</span><button class="tool arrow" aria-label="Down"><svg width="13" height="11"><path d="M0 0h13L6 11z"/></svg></button></div>
        <div class="tool-row"><button class="tool yellow">HL</button><button class="tool">TL</button></div>
        <div class="tool-row"><button class="tool yellow">Si</button><button class="tool">Gr</button></div>
      </div>
      <svg class="layer" shape-rendering="crispEdges"><g transform="${shift}">${frontLayer(d)}</g></svg>
      <div class="signals">${d.signals.map(signal).join('')}</div>
      <p class="info"><span>US500Cash</span><span>${d.info[0]}</span><span>${d.info[1]}</span><span>6 pips</span></p>
    </div>
    <svg class="price-axis" shape-rendering="crispEdges">${priceAxis(d)}</svg>
    <svg class="time-axis" shape-rendering="crispEdges">${timeAxis(d)}</svg>
  </div>
</section>`;
}).join('');
```
